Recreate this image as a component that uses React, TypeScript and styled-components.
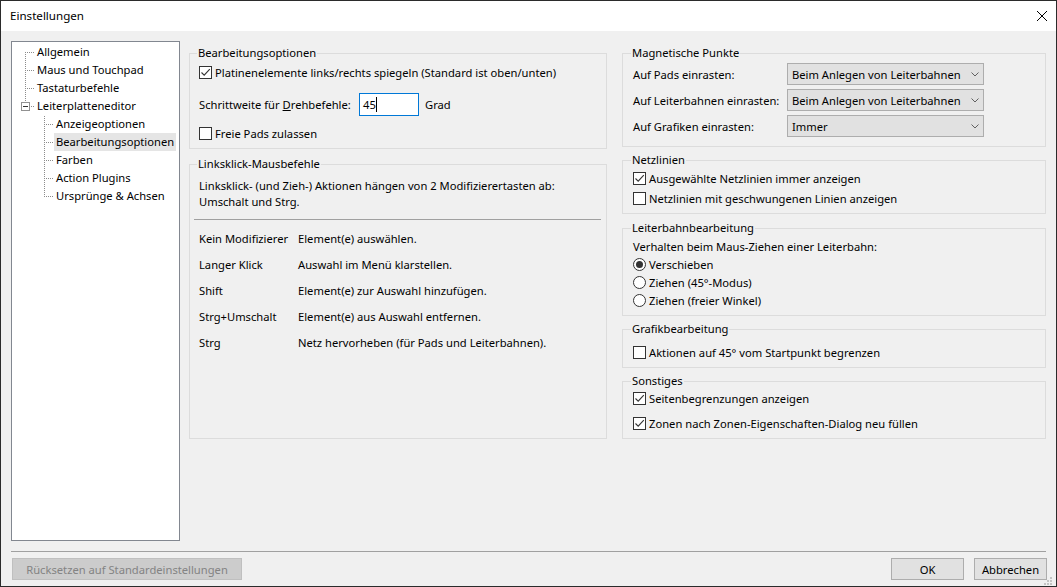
import React from 'react';
import styled, { createGlobalStyle } from 'styled-components';

const FONT = `"Noto Sans", "Segoe UI", sans-serif`;
const FS = '11.2px';

const Global = createGlobalStyle`
  html, body { margin: 0; padding: 0; background: #ffffff; }
  body { font-family: ${FONT}; font-size: ${FS}; color: #000; }
  * { box-sizing: border-box; }
`;

const Window = styled.div`
  position: relative;
  width: 1057px;
  height: 587px;
  border: 1px solid #2b2b2b;
  background: #f0f0f0;
  display: flex;
  flex-direction: column;
  overflow: hidden;
`;

const TitleBar = styled.div`
  height: 30px;
  flex: none;
  background: #ffffff;
  display: flex;
  align-items: center;
  justify-content: space-between;
  padding: 0 9px 0 9px;
`;

const TitleText = styled.span`
  font-size: 11.6px;
  line-height: 16px;
`;

const CloseBtn = styled.span`
  display: flex;
  width: 10px;
  height: 10px;
`;

const Main = styled.div`
  display: flex;
  align-items: flex-start;
  gap: 9px;
  padding: 10px 9px 0 10px;
`;

const Tree = styled.div`
  width: 169px;
  height: 500px;
  flex: none;
  background: #ffffff;
  border: 1px solid #828790;
  padding-top: 1px;
  display: flex;
  flex-direction: column;
`;

const TreeRow = styled.div`
  display: flex;
  align-items: center;
  height: 18px;
`;

const TreeLabel = styled.span<{ $selected?: boolean }>`
  padding: 0 2px;
  height: 18px;
  line-height: 18px;
  white-space: nowrap;
  background: ${(p) => (p.$selected ? '#e5e5e5' : 'transparent')};
`;

const Content = styled.div`
  display: grid;
  grid-template-columns: 418px 424px;
  column-gap: 15px;
  margin-top: 4px;
  align-items: stretch;
`;

const Column = styled.div<{ $gap: number }>`
  display: flex;
  flex-direction: column;
  gap: ${(p) => p.$gap}px;
`;

const Group = styled.fieldset<{ $pt: number; $pb: number; $pl?: number; $mt?: number; $grow?: boolean }>`
  margin: ${(p) => p.$mt ?? 0}px 0 0 0;
  min-width: 0;
  border: 1px solid #dcdcdc;
  padding: ${(p) => p.$pt}px 9px ${(p) => p.$pb}px ${(p) => p.$pl ?? 9}px;
  display: flex;
  flex-direction: column;
  flex: ${(p) => (p.$grow ? '1 1 auto' : 'none')};
`;

const Legend = styled.legend`
  padding: 0 1px;
  margin-left: -2px;
  line-height: 16px;
  font-size: ${FS};
`;

const CheckRow = styled.div<{ $mt?: number }>`
  display: flex;
  align-items: center;
  gap: 3px;
  height: 18px;
  margin-top: ${(p) => p.$mt ?? 0}px;
  white-space: nowrap;
`;

const Box = styled.span`
  width: 13px;
  height: 13px;
  flex: none;
  border: 1px solid #333333;
  background: #ffffff;
  display: flex;
  align-items: center;
  justify-content: center;
`;

const RadioCircle = styled.span`
  width: 13px;
  height: 13px;
  flex: none;
  border: 1px solid #333333;
  border-radius: 50%;
  background: #ffffff;
  display: flex;
  align-items: center;
  justify-content: center;
`;

const RadioDot = styled.span`
  width: 7px;
  height: 7px;
  border-radius: 50%;
  background: #333333;
`;

const TextLine = styled.div<{ $mt?: number }>`
  line-height: 16px;
  margin-top: ${(p) => p.$mt ?? 0}px;
  white-space: nowrap;
`;

const FieldRow = styled.div<{ $mt: number }>`
  display: flex;
  align-items: center;
  margin-top: ${(p) => p.$mt}px;
  height: 23px;
  white-space: nowrap;
`;

const FieldLabel = styled.span`
  width: 160px;
  flex: none;
`;

const Input = styled.div`
  width: 60px;
  height: 23px;
  border: 1px solid #0078d7;
  background: #ffffff;
  display: flex;
  align-items: center;
  padding-left: 3px;
`;

const Caret = styled.span`
  width: 1px;
  height: 15px;
  background: #000;
`;

const Unit = styled.span`
  margin-left: 6px;
`;

const Separator = styled.div<{ $mt: number; $ml: number; $mr: number }>`
  height: 1px;
  flex: none;
  background: #a0a0a0;
  margin: ${(p) => p.$mt}px ${(p) => p.$mr}px 0 ${(p) => p.$ml}px;
`;

const KeyGrid = styled.div`
  display: grid;
  grid-template-columns: 99px auto;
  row-gap: 10px;
  margin-top: 11px;
  line-height: 16px;
  white-space: nowrap;
`;

const SelectGrid = styled.div`
  display: grid;
  grid-template-columns: 154px 197px;
  row-gap: 4px;
  align-items: center;
  white-space: nowrap;
`;

const Select = styled.div`
  height: 22px;
  border: 1px solid #adadad;
  background: #e1e1e1;
  display: flex;
  align-items: center;
  justify-content: space-between;
  padding: 0 4px 0 4px;
  white-space: nowrap;
`;

const Footer = styled.div`
  display: flex;
  justify-content: space-between;
  margin-top: 6px;
  padding: 0 9px 0 11px;
`;

const ButtonGroup = styled.div`
  display: flex;
  gap: 10px;
`;

const Button = styled.div<{ $w: number; $disabled?: boolean }>`
  width: ${(p) => p.$w}px;
  height: 22px;
  display: flex;
  align-items: center;
  justify-content: center;
  border: 1px solid ${(p) => (p.$disabled ? '#bfbfbf' : '#adadad')};
  background: ${(p) => (p.$disabled ? '#cccccc' : '#e1e1e1')};
  color: ${(p) => (p.$disabled ? '#838383' : '#000000')};
  white-space: nowrap;
`;

const Grip = styled.svg`
  position: absolute;
  right: 4px;
  bottom: 1px;
`;

/* ---------- icons ---------- */

const CheckMark = () => (
  <svg width="11" height="11" viewBox="0 0 11 11">
    <polyline points="1.5,5.5 4.2,8.2 9.8,2.2" fill="none" stroke="#333333" strokeWidth="1.1" />
  </svg>
);

const Chevron = () => (
  <svg width="8" height="5" viewBox="0 0 8 5">
    <polyline points="0.5,0.5 4,4 7.5,0.5" fill="none" stroke="#606060" strokeWidth="1" />
  </svg>
);

const CloseIcon = () => (
  <svg width="10" height="10" viewBox="0 0 10 10">
    <line x1="0" y1="0" x2="10" y2="10" stroke="#000" strokeWidth="1" />
    <line x1="10" y1="0" x2="0" y2="10" stroke="#000" strokeWidth="1" />
  </svg>
);

const DOT = '#8c8c8c';

function dotsV(x: number, y0: number, y1: number) {
  const r: React.ReactElement[] = [];
  for (let y = y0; y < y1; y += 2) r.push(<rect key={`v${x}-${y}`} x={x} y={y} width={1} height={1} fill={DOT} />);
  return r;
}
function dotsH(y: number, x0: number, x1: number) {
  const r: React.ReactElement[] = [];
  for (let x = x0; x < x1; x += 2) r.push(<rect key={`h${y}-${x}`} x={x} y={y} width={1} height={1} fill={DOT} />);
  return r;
}

type Kind = 'first' | 'mid' | 'expander' | 'last';

const Connector = ({ level, kind }: { level: number; kind: Kind }) => {
  const w = level === 1 ? 23 : 42;
  const vx = level === 1 ? 13 : 32;
  const els: React.ReactElement[] = [];
  if (kind === 'first') {
    els.push(...dotsV(vx, 9, 18));
    els.push(...dotsH(9, vx + 2, w));
  } else if (kind === 'mid') {
    els.push(...dotsV(vx, 1, 18));
    els.push(...dotsH(9, vx + 2, w));
  } else if (kind === 'last') {
    els.push(...dotsV(vx, 1, 10));
    els.push(...dotsH(9, vx + 2, w));
  } else {
    els.push(...dotsV(vx, 1, 5));
    els.push(<rect key="box" x={vx - 3.5} y={5.5} width={8} height={8} fill="#fff" stroke="#919191" />);
    els.push(<rect key="minus" x={vx - 2} y={9} width={5} height={1} fill="#333" />);
    els.push(...dotsH(9, vx + 6, w));
  }
  return (
    <svg width={w} height={18} viewBox={`0 0 ${w} 18`} style={{ flex: 'none' }}>
      {els}
    </svg>
  );
};

const treeItems: { label: string; level: number; kind: Kind; selected?: boolean }[] = [
  { label: 'Allgemein', level: 1, kind: 'first' },
  { label: 'Maus und Touchpad', level: 1, kind: 'mid' },
  { label: 'Tastaturbefehle', level: 1, kind: 'mid' },
  { label: 'Leiterplatteneditor', level: 1, kind: 'expander' },
  { label: 'Anzeigeoptionen', level: 2, kind: 'mid' },
  { label: 'Bearbeitungsoptionen', level: 2, kind: 'mid', selected: true },
  { label: 'Farben', level: 2, kind: 'mid' },
  { label: 'Action Plugins', level: 2, kind: 'mid' },
  { label: 'Ursprünge & Achsen', level: 2, kind: 'last' },
];

const Check = ({ checked, label, mt }: { checked?: boolean; label: string; mt?: number }) => (
  <CheckRow $mt={mt}>
    <Box>{checked && <CheckMark />}</Box>
    <span>{label}</span>
  </CheckRow>
);

const Radio = ({ checked, label }: { checked?: boolean; label: string }) => (
  <CheckRow>
    <RadioCircle>{checked && <RadioDot />}</RadioCircle>
    <span>{label}</span>
  </CheckRow>
);

const keyRows = [
  ['Kein Modifizierer', 'Element(e) auswählen.'],
  ['Langer Klick', 'Auswahl im Menü klarstellen.'],
  ['Shift', 'Element(e) zur Auswahl hinzufügen.'],
  ['Strg+Umschalt', 'Element(e) aus Auswahl entfernen.'],
  ['Strg', 'Netz hervorheben (für Pads und Leiterbahnen).'],
];

const selects = [
  ['Auf Pads einrasten:', 'Beim Anlegen von Leiterbahnen'],
  ['Auf Leiterbahnen einrasten:', 'Beim Anlegen von Leiterbahnen'],
  ['Auf Grafiken einrasten:', 'Immer'],
];

export default function App() {
  return (
    <>
      <Global />
      <Window>
        <TitleBar>
          <TitleText>Einstellungen</TitleText>
          <CloseBtn>
            <CloseIcon />
          </CloseBtn>
        </TitleBar>
        <Main>
          <Tree>
            {treeItems.map((it) => (
              <TreeRow key={it.label}>
                <Connector level={it.level} kind={it.kind} />
                <TreeLabel $selected={it.selected}>{it.label}</TreeLabel>
              </TreeRow>
            ))}
          </Tree>
          <Content>
            <Column $gap={7}>
              <Group $pt={2} $pb={6}>
                <Legend>Bearbeitungsoptionen</Legend>
                <Check checked label="Platinenelemente links/rechts spiegeln (Standard ist oben/unten)" />
                <FieldRow $mt={12}>
                  <FieldLabel>
                    Schrittweite für <u>D</u>rehbefehle:
                  </FieldLabel>
                  <Input>
                    <span>45</span>
                    <Caret />
                  </Input>
                  <Unit>Grad</Unit>
                </FieldRow>
                <Check label="Freie Pads zulassen" mt={8} />
              </Group>
              <Group $pt={6} $pb={6} $grow>
                <Legend>Linksklick-Mausbefehle</Legend>
                <TextLine>Linksklick- (und Zieh-) Aktionen hängen von 2 Modifizierertasten ab:</TextLine>
                <TextLine>Umschalt und Strg.</TextLine>
                <Separator $mt={9} $ml={-5} $mr={-4} />
                <KeyGrid>
                  {keyRows.map(([k, v]) => (
                    <React.Fragment key={k}>
                      <span>{k}</span>
                      <span>{v}</span>
                    </React.Fragment>
                  ))}
                </KeyGrid>
              </Group>
            </Column>
            <Column $gap={5}>
              <Group $pt={2} $pb={9} $pl={10}>
                <Legend>Magnetische Punkte</Legend>
                <SelectGrid>
                  {selects.map(([l, v]) => (
                    <React.Fragment key={l}>
                      <span>{l}</span>
                      <Select>
                        <span>{v}</span>
                        <Chevron />
                      </Select>
                    </React.Fragment>
                  ))}
                </SelectGrid>
              </Group>
              <Group $pt={1} $pb={6} $pl={10}>
                <Legend>Netzlinien</Legend>
                <Check checked label="Ausgewählte Netzlinien immer anzeigen" />
                <Check label="Netzlinien mit geschwungenen Linien anzeigen" mt={2} />
              </Group>
              <Group $pt={3} $pb={6} $pl={10} $mt={1}>
                <Legend>Leiterbahnbearbeitung</Legend>
                <TextLine>Verhalten beim Maus-Ziehen einer Leiterbahn:</TextLine>
                <Radio checked label="Verschieben" />
                <Radio label="Ziehen (45°-Modus)" />
                <Radio label="Ziehen (freier Winkel)" />
              </Group>
              <Group $pt={6} $pb={6} $pl={10}>
                <Legend>Grafikbearbeitung</Legend>
                <Check label="Aktionen auf 45° vom Startpunkt begrenzen" />
              </Group>
              <Group $pt={0} $pb={6} $pl={10}>
                <Legend>Sonstiges</Legend>
                <Check checked label="Seitenbegrenzungen anzeigen" />
                <Check checked label="Zonen nach Zonen-Eigenschaften-Dialog neu füllen" mt={7} />
              </Group>
            </Column>
          </Content>
        </Main>
        <Separator $mt={10} $ml={10} $mr={10} />
        <Footer>
          <Button $w={230} $disabled>
            Rücksetzen auf Standardeinstellungen
          </Button>
          <ButtonGroup>
            <Button $w={73}>OK</Button>
            <Button $w={73}>Abbrechen</Button>
          </ButtonGroup>
        </Footer>
        <Grip width="9" height="9" viewBox="0 0 9 9">
          {[
            [7, 1],
            [7, 4],
            [4, 4],
            [7, 7],
            [4, 7],
            [1, 7],
          ].map(([x, y]) => (
            <rect key={`${x}-${y}`} x={x} y={y} width={2} height={2} fill="#c4c4c4" />
          ))}
        </Grip>
      </Window>
    </>
  );
}
